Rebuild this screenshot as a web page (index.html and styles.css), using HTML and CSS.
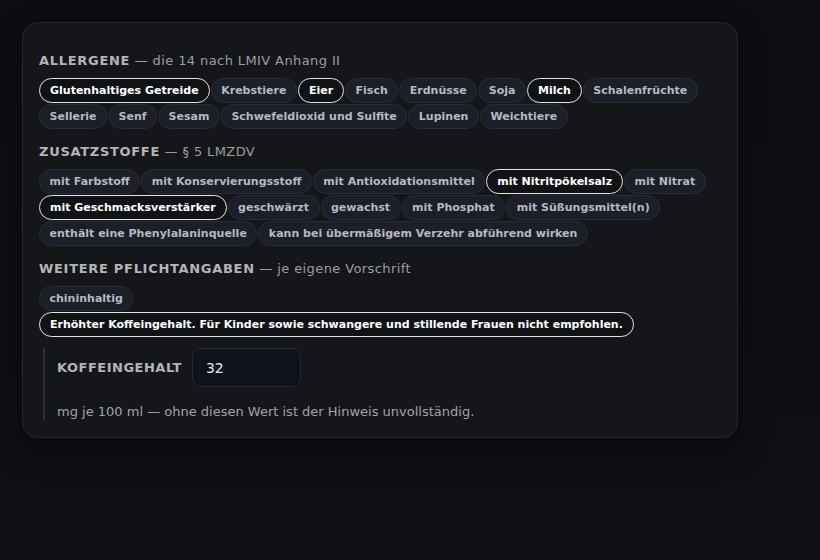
FILE: index.html
```html
<!DOCTYPE html>
<html lang="de">
    <head>
        <meta charset="UTF-8">
        <meta name="viewport" content="width=device-width, initial-scale=1.0">
        <title>Kennzeichnung</title>
        <link rel="stylesheet" href="styles.css">
    </head>
    <body>
        <div class="card">
            <!-- Allergene -->
            <h3 class="group-title"><b>ALLERGENE</b> — die 14 nach LMIV Anhang II</h3>
            <div class="chips">
                <span class="chip on">Glutenhaltiges Getreide</span>
                <span class="chip">Krebstiere</span>
                <span class="chip on">Eier</span>
                <span class="chip">Fisch</span>
                <span class="chip">Erdnüsse</span>
                <span class="chip">Soja</span>
                <span class="chip on">Milch</span>
                <span class="chip">Schalenfrüchte</span>
                <span class="chip">Sellerie</span>
                <span class="chip">Senf</span>
                <span class="chip">Sesam</span>
                <span class="chip">Schwefeldioxid und Sulfite</span>
                <span class="chip">Lupinen</span>
                <span class="chip">Weichtiere</span>
            </div>

            <!-- Zusatzstoffe -->
            <h3 class="group-title"><b>ZUSATZSTOFFE</b> — § 5 LMZDV</h3>
            <div class="chips">
                <span class="chip">mit Farbstoff</span>
                <span class="chip">mit Konservierungsstoff</span>
                <span class="chip">mit Antioxidationsmittel</span>
                <span class="chip on">mit Nitritpökelsalz</span>
                <span class="chip">mit Nitrat</span>
                <span class="chip on">mit Geschmacksverstärker</span>
                <span class="chip">geschwärzt</span>
                <span class="chip">gewachst</span>
                <span class="chip">mit Phosphat</span>
                <span class="chip">mit Süßungsmittel(n)</span>
                <span class="chip">enthält eine Phenylalaninquelle</span>
                <span class="chip">kann bei übermäßigem Verzehr abführend wirken</span>
            </div>

            <!-- weitere Pflichtangaben -->
            <h3 class="group-title"><b>WEITERE PFLICHTANGABEN</b> — je eigene Vorschrift</h3>
            <div class="chips">
                <span class="chip">chininhaltig</span>
                <span class="chip on">Erhöhter Koffeingehalt. Für Kinder sowie schwangere und stillende Frauen nicht empfohlen.</span>
            </div>

            <div class="detail">
                <label class="field">
                    <span class="field-label">KOFFEINGEHALT</span>
                    <input class="field-input" type="text" value="32">
                </label>
                <p class="hint">mg je 100 ml — ohne diesen Wert ist der Hinweis unvollständig.</p>
            </div>
        </div>
    </body>
</html>
```

FILE: styles.css
```css
html {
    height: 100%;
}
body {
    margin: 0;
    min-height: 100%;
    padding: 22px;
    box-sizing: border-box;
    background: linear-gradient(180deg, #0d0e12 0%, #0f1015 100%);
    font-family: "DejaVu Sans", Verdana, sans-serif;
    color: #b8bac0;
}
.card {
    width: 716px;
    box-sizing: border-box;
    padding: 29px 16px 16px 16px;
    background: #151619;
    border: 1px solid #25272c;
    border-radius: 16px;
    box-shadow: 0 12px 30px rgba(0, 0, 0, 0.35);
}
.group-title {
    margin: 0;
    font-size: 13px;
    line-height: 18px;
    font-weight: normal;
    letter-spacing: 0.4px;
    color: #9d9ea3;
}
.group-title b {
    color: #b4b5b9;
    letter-spacing: 0.7px;
}
.chips {
    display: flex;
    flex-wrap: wrap;
    gap: 1px 1px;
    margin: 8px 0 14px;
}
.chip {
    display: inline-block;
    padding: 5px 9.5px;
    font-size: 11px;
    line-height: 13px;
    font-weight: bold;
    color: #b6b9c1;
    background: #1c1f27;
    border: 1px solid #2a2d36;
    border-radius: 13px;
}
.chip.on {
    padding: 5px 10px;
    color: #ffffff;
    background: #111215;
    border-color: #e4e4e4;
}
.detail {
    margin: -3px 0 0 4px;
    padding: 0 0 0 12px;
    border-left: 2px solid #2c2e33;
}
.field {
    display: flex;
    align-items: center;
    gap: 10px;
}
.field-label {
    font-size: 13px;
    font-weight: bold;
    letter-spacing: 0.5px;
    color: #b4b5b9;
}
.field-input {
    width: 109px;
    height: 39px;
    box-sizing: border-box;
    padding: 0 13px;
    font-family: "DejaVu Sans", Verdana, sans-serif;
    font-size: 14px;
    color: #e8e8ea;
    background: #0f121a;
    border: 1px solid #25282f;
    border-radius: 9px;
    outline: none;
}
.hint {
    margin: 16px 0 0;
    padding-bottom: 1px;
    font-size: 13px;
    line-height: 17px;
    color: #a2a3a8;
}
```
